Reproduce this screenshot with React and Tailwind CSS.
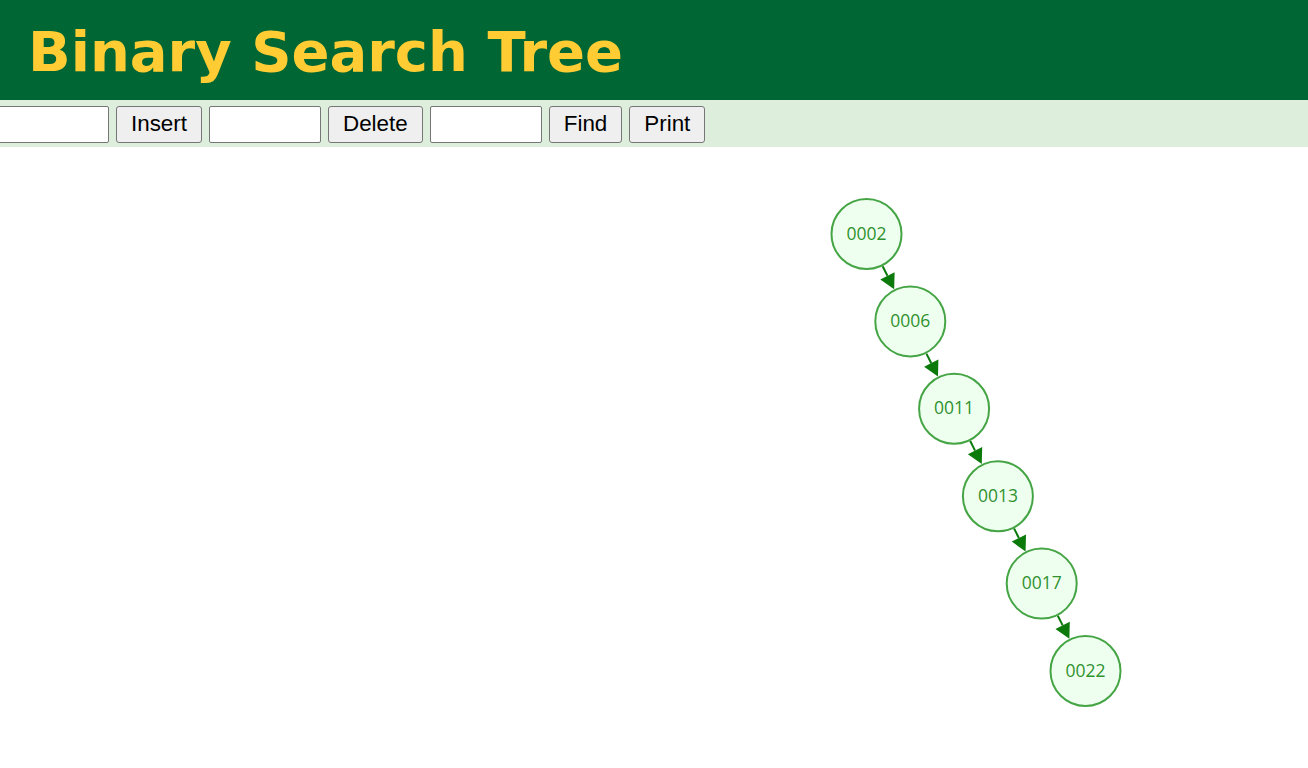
import React from "react";

const values = ["0002", "0006", "0011", "0013", "0017", "0022"];

function Tree() {
  const r = 35;
  const nodes = values.map((v, i) => ({ v, x: 866.5 + 43.8 * i, y: 87 + 87.4 * i }));
  const arrows = [];
  for (let i = 0; i < nodes.length - 1; i++) {
    const a = nodes[i];
    const b = nodes[i + 1];
    const dx = b.x - a.x;
    const dy = b.y - a.y;
    const len = Math.hypot(dx, dy);
    const ux = dx / len;
    const uy = dy / len;
    const sx = a.x + ux * (r + 1);
    const sy = a.y + uy * (r + 1);
    const tx = b.x - ux * (r + 1);
    const ty = b.y - uy * (r + 1);
    const hl = 15;
    const hw = 8;
    const bx = tx - ux * hl;
    const by = ty - uy * hl;
    const px = -uy;
    const py = ux;
    arrows.push(
      <g key={i}>
        <line x1={sx} y1={sy} x2={bx} y2={by} stroke="#0b7a0b" strokeWidth="2" />
        <polygon
          points={`${tx},${ty} ${bx + px * hw},${by + py * hw} ${bx - px * hw},${by - py * hw}`}
          fill="#0b7a0b"
        />
      </g>
    );
  }
  return (
    <svg width="1308" height="621" className="block">
      {arrows}
      {nodes.map((n) => (
        <g key={n.v}>
          <circle cx={n.x} cy={n.y} r={r} fill="#efffef" stroke="#45a545" strokeWidth="2" />
          <text
            x={n.x}
            y={n.y + 5.5}
            textAnchor="middle"
            fill="#2f922f"
            fontSize="17.5"
            fontFamily="'Open Sans', sans-serif"
          >
            {n.v}
          </text>
        </g>
      ))}
    </svg>
  );
}

function Input() {
  return (
    <input
      type="text"
      className="w-[112px] h-[37px] bg-white border border-[#767676] rounded-[2px] shrink-0"
    />
  );
}

function Btn({ children }) {
  return (
    <button className="h-[37px] px-[14px] bg-[#efefef] border border-[#767676] rounded-[3px] text-[22.4px] text-black shrink-0 leading-none font-['Liberation_Sans',Arial,sans-serif]">
      {children}
    </button>
  );
}

export default function App() {
  return (
    <div className="w-[1308px] h-[768px] bg-white overflow-hidden font-['Liberation_Sans',Arial,sans-serif]">
      <div className="h-[100px] bg-[#006633] pl-[28px] pt-[19px]">
        <h1 className="text-[56px] font-bold text-[#ffcc33] leading-[65px] font-['DejaVu_Sans',Verdana,sans-serif]">
          Binary Search Tree
        </h1>
      </div>
      <div className="h-[47px] bg-[#ddeedd] flex items-start pt-[6px] gap-[7px] -ml-[3px]">
        <Input />
        <Btn>Insert</Btn>
        <Input />
        <Btn>Delete</Btn>
        <Input />
        <Btn>Find</Btn>
        <Btn>Print</Btn>
      </div>
      <Tree />
    </div>
  );
}
